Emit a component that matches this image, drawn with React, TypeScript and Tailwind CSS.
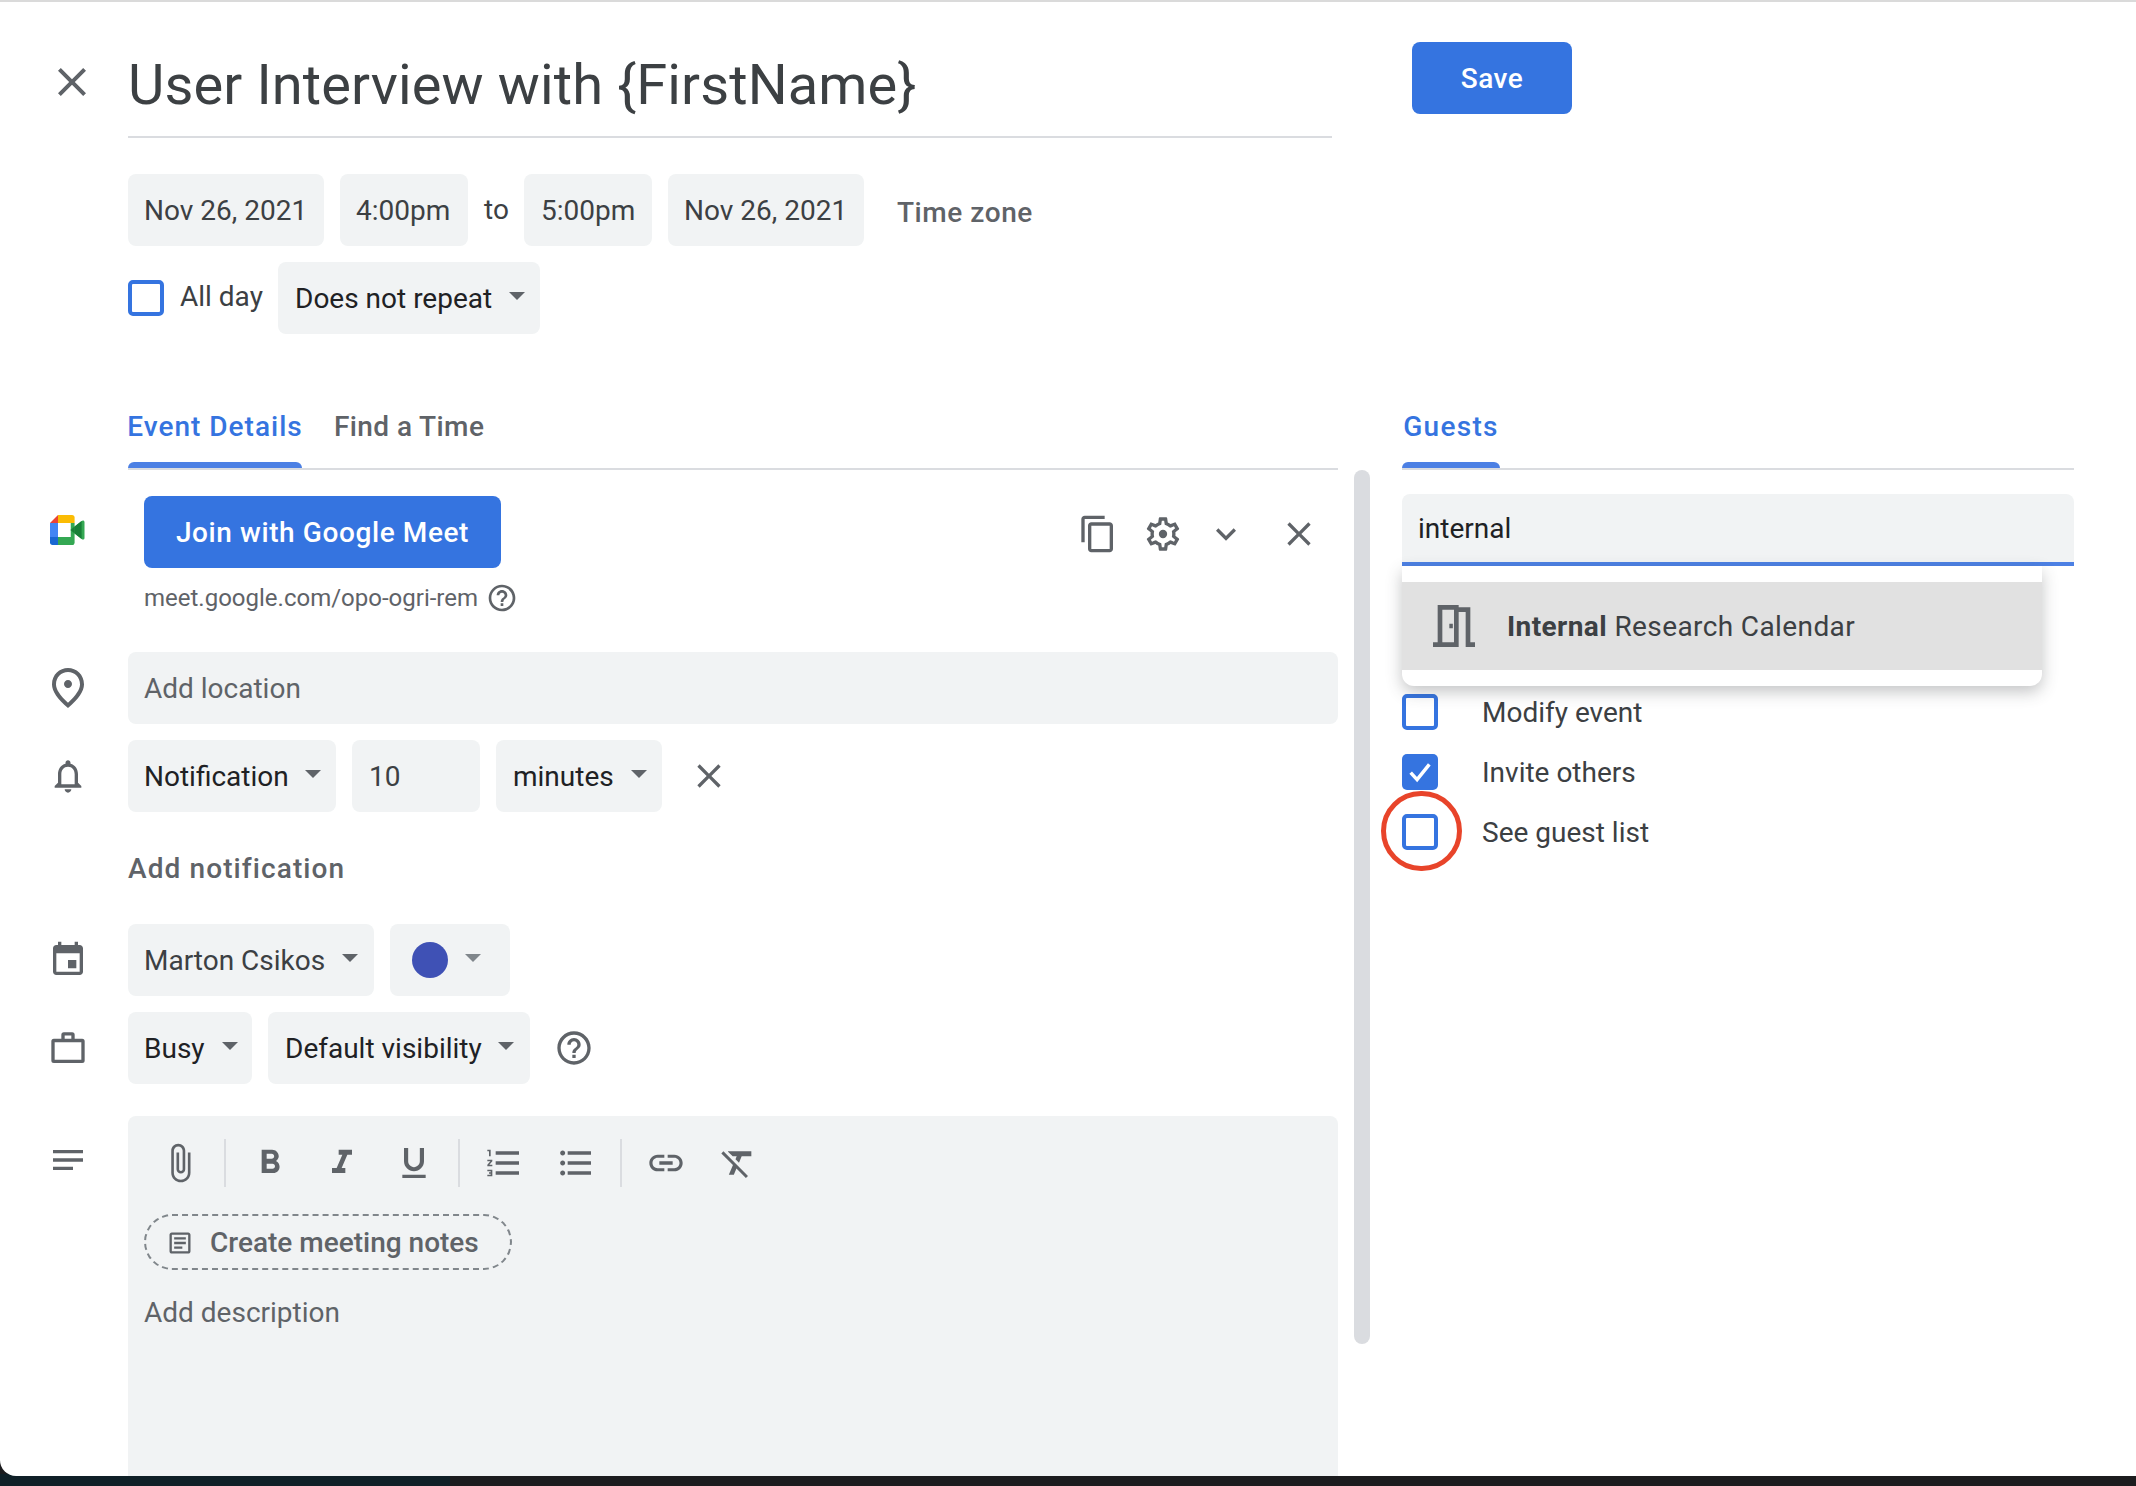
import React from "react";

const P: Record<string, string> = {
  close: "M19 6.41L17.59 5 12 10.59 6.41 5 5 6.41 10.59 12 5 17.59 6.41 19 12 13.41 17.59 19 19 17.59 13.41 12z",
  copy: "M16 1H4c-1.1 0-2 .9-2 2v14h2V3h12V1zm3 4H8c-1.1 0-2 .9-2 2v14c0 1.1.9 2 2 2h11c1.1 0 2-.9 2-2V7c0-1.1-.9-2-2-2zm0 16H8V7h11v14z",
  gear: "M19.43 12.98c.04-.32.07-.64.07-.98 0-.34-.03-.66-.07-.98l2.11-1.65c.19-.15.24-.42.12-.64l-2-3.46c-.09-.16-.26-.25-.44-.25-.06 0-.12.01-.17.03l-2.49 1c-.52-.4-1.08-.73-1.69-.98l-.38-2.65C14.46 2.18 14.25 2 14 2h-4c-.25 0-.46.18-.49.42l-.38 2.65c-.61.25-1.17.59-1.69.98l-2.49-1c-.06-.02-.12-.03-.18-.03-.17 0-.34.09-.43.25l-2 3.46c-.13.22-.07.49.12.64l2.11 1.65c-.04.32-.07.65-.07.98 0 .33.03.66.07.98l-2.11 1.65c-.19.15-.24.42-.12.64l2 3.46c.09.16.26.25.44.25.06 0 .12-.01.17-.03l2.49-1c.52.4 1.08.73 1.69.98l.38 2.65c.03.24.24.42.49.42h4c.25 0 .46-.18.49-.42l.38-2.65c.61-.25 1.17-.59 1.69-.98l2.49 1c.06.02.12.03.18.03.17 0 .34-.09.43-.25l2-3.46c.12-.22.07-.49-.12-.64l-2.11-1.65zm-1.98-1.71c.04.31.05.52.05.73 0 .21-.02.43-.05.73l-.14 1.13.89.7 1.08.84-.7 1.21-1.27-.51-1.04-.42-.9.68c-.43.32-.84.56-1.25.73l-1.06.43-.16 1.13-.2 1.35h-1.4l-.19-1.35-.16-1.13-1.06-.43c-.43-.18-.83-.41-1.23-.71l-.91-.7-1.06.43-1.27.51-.7-1.21 1.08-.84.89-.7-.14-1.13c-.03-.31-.05-.54-.05-.74s.02-.43.05-.73l.14-1.13-.89-.7-1.08-.84.7-1.21 1.27.51 1.04.42.9-.68c.43-.32.84-.56 1.25-.73l1.06-.43.16-1.13.2-1.35h1.39l.19 1.35.16 1.13 1.06.43c.43.18.83.41 1.23.71l.91.7 1.06-.43 1.27-.51.7 1.21-1.07.85-.89.7.14 1.13zM12 9.5a2.5 2.5 0 1 0 0 5 2.5 2.5 0 0 0 0-5z",
  chevron: "M16.59 8.59L12 13.17 7.41 8.59 6 10l6 6 6-6z",
  help: "M11 18h2v-2h-2v2zm1-16C6.48 2 2 6.48 2 12s4.48 10 10 10 10-4.48 10-10S17.52 2 12 2zm0 18c-4.41 0-8-3.59-8-8s3.59-8 8-8 8 3.59 8 8-3.59 8-8 8zm0-14c-2.21 0-4 1.79-4 4h2c0-1.1.9-2 2-2s2 .9 2 2c0 2-3 1.75-3 5h2c0-2.25 3-2.5 3-5 0-2.21-1.79-4-4-4z",
  place: "M12 12c-1.1 0-2-.9-2-2s.9-2 2-2 2 .9 2 2-.9 2-2 2zm6-1.8C18 6.57 15.35 4 12 4s-6 2.57-6 6.2c0 2.34 1.95 5.44 6 9.14 4.05-3.7 6-6.8 6-9.14zM12 2c4.2 0 8 3.22 8 8.2 0 3.32-2.67 7.25-8 11.8-5.33-4.55-8-8.48-8-11.8C4 5.22 7.8 2 12 2z",
  bell: "M12 22c1.1 0 2-.9 2-2h-4c0 1.1.9 2 2 2zm6-6v-5c0-3.07-1.63-5.64-4.5-6.32V4c0-.83-.67-1.5-1.5-1.5s-1.5.67-1.5 1.5v.68C7.64 5.36 6 7.92 6 11v5l-2 2v1h16v-1l-2-2zm-2 1H8v-6c0-2.48 1.51-4.5 4-4.5s4 2.02 4 4.5v6z",
  event: "M17 12h-5v5h5v-5zM16 1v2H8V1H6v2H5c-1.11 0-1.99.9-1.99 2L3 19c0 1.1.89 2 2 2h14c1.1 0 2-.9 2-2V5c0-1.1-.9-2-2-2h-1V1h-2zm3 18H5V8h14v11z",
  work: "M3.5 6.5H8V4a1.5 1.5 0 0 1 1.5-1.5h5A1.5 1.5 0 0 1 16 4v2.5h4.5A1.5 1.5 0 0 1 22 8v11.5a1.5 1.5 0 0 1-1.5 1.5h-17A1.5 1.5 0 0 1 2 19.5V8a1.5 1.5 0 0 1 1.5-1.5zM4 8.5V19h16V8.5zM10 4.5v2h4v-2z",
  notes: "M3 6h18v2H3zm0 5h18v2H3zm0 5h12v2H3z",
  attach: "M16.5 6v11.5c0 2.21-1.79 4-4 4s-4-1.79-4-4V5c0-1.38 1.12-2.5 2.5-2.5s2.5 1.12 2.5 2.5v10.5c0 .55-.45 1-1 1s-1-.45-1-1V6H10v9.5c0 1.38 1.12 2.5 2.5 2.5s2.5-1.12 2.5-2.5V5c0-2.21-1.79-4-4-4S7 2.79 7 5v12.5c0 3.04 2.46 5.5 5.5 5.5s5.5-2.46 5.5-5.5V6h-1.5z",
  bold: "M15.6 10.79c.97-.67 1.65-1.77 1.65-2.79 0-2.26-1.75-4-4-4H7v14h7.04c2.09 0 3.71-1.7 3.71-3.79 0-1.52-.86-2.82-2.15-3.42zM10 6.5h3c.83 0 1.5.67 1.5 1.5s-.67 1.5-1.5 1.5h-3v-3zm3.5 9H10v-3h3.5c.83 0 1.5.67 1.5 1.5s-.67 1.5-1.5 1.5z",
  italic: "M10 4v3h2.21l-3.42 8H6v3h8v-3h-2.21l3.42-8H18V4z",
  underline: "M12 17c3.31 0 6-2.69 6-6V3h-2.5v8c0 1.93-1.57 3.5-3.5 3.5S8.5 12.93 8.5 11V3H6v8c0 3.31 2.69 6 6 6zm-7 2v2h14v-2H5z",
  numbered: "M2 17h2v.5H3v1h1v.5H2v1h3v-4H2v1zm1-9h1V4H2v1h1v3zm-1 3h1.8L2 13.1v.9h3v-1H3.2L5 10.9V10H2v1zm5-6v2h14V5H7zm0 14h14v-2H7v2zm0-6h14v-2H7v2z",
  bulleted: "M4 10.5c-.83 0-1.5.67-1.5 1.5s.67 1.5 1.5 1.5 1.5-.67 1.5-1.5-.67-1.5-1.5-1.5zm0-6c-.83 0-1.5.67-1.5 1.5S3.17 7.5 4 7.5 5.5 6.83 5.5 6 4.83 4.5 4 4.5zm0 12c-.83 0-1.5.68-1.5 1.5s.68 1.5 1.5 1.5 1.5-.68 1.5-1.5-.67-1.5-1.5-1.5zM7 19h14v-2H7v2zm0-6h14v-2H7v2zm0-8v2h14V5H7z",
  link: "M3.9 12c0-1.71 1.39-3.1 3.1-3.1h4V7H7c-2.76 0-5 2.24-5 5s2.24 5 5 5h4v-1.9H7c-1.71 0-3.1-1.39-3.1-3.1zM8 13h8v-2H8v2zm9-6h-4v1.9h4c1.71 0 3.1 1.39 3.1 3.1s-1.39 3.1-3.1 3.1h-4V17h4c2.76 0 5-2.24 5-5s-2.24-5-5-5z",
  clear: "M3.27 5L2 6.27l6.97 6.97L6.5 19h3l1.57-3.66L16.73 21 18 19.73 3.55 5.27 3.27 5zM6 5v.18L8.82 8h2.4l-.72 1.68 2.1 2.1L14.21 8H20V5H6z",
  doc: "M19 5v14H5V5h14m0-2H5c-1.1 0-2 .9-2 2v14c0 1.1.9 2 2 2h14c1.1 0 2-.9 2-2V5c0-1.1-.9-2-2-2zM7 7h10v2H7zm0 4h10v2H7zm0 4h7v2H7z",
  door: "M14 6v15H3v-2h2V3h9v1h5v15h2v2h-4V6h-3zM12 5H7v14h5V5zM10 11h1.5v2H10z",
};

function Icon({ d, size = 40, className = "" }: { d: string; size?: number; className?: string }) {
  return (
    <svg width={size} height={size} viewBox="0 0 24 24" className={"shrink-0 fill-[#5f6368] " + className}>
      <path fillRule="evenodd" d={P[d]} />
    </svg>
  );
}

function Caret({ muted }: { muted?: boolean }) {
  return (
    <svg width="16" height="8" viewBox="0 0 16 8" className={"shrink-0 -mt-[6px] " + (muted ? "fill-[#80868b]" : "fill-[#5f6368]")}>
      <polygon points="0,0 16,0 8,8" />
    </svg>
  );
}

function Pill({ children, className = "" }: { children: React.ReactNode; className?: string }) {
  return (
    <div className={"h-[72px] pt-[2px] rounded-lg bg-[#f1f3f4] flex items-center text-[28px] text-[#3c4043] shrink-0 whitespace-nowrap " + className}>
      {children}
    </div>
  );
}

function Check({ checked }: { checked?: boolean }) {
  return checked ? (
    <div className="w-9 h-9 rounded-[5px] bg-[#3574e0] flex items-center justify-center shrink-0">
      <svg width="28" height="28" viewBox="0 0 24 24" className="fill-none stroke-white">
        <path d="M4 12.5l5.5 6L20 5.5" strokeWidth="3" />
      </svg>
    </div>
  ) : (
    <div className="w-9 h-9 rounded-[5px] border-4 border-[#3574e0] shrink-0" />
  );
}

function MeetLogo() {
  return (
    <svg width="36" height="30" viewBox="0 0 36 30">
      <path d="M8 0L0 8h8z" fill="#ea4335" />
      <path d="M0 8h8v14H0z" fill="#4285f4" />
      <path d="M0 22h8v8H2.5C1 30 0 29 0 27.5z" fill="#1967d2" />
      <path d="M8 0h14c1.5 0 2.6 1 2.6 2.6V8H8z" fill="#fbbc04" />
      <path d="M8 22h16.6v5.4c0 1.6-1.1 2.6-2.6 2.6H8z" fill="#34a853" />
      <path d="M20.5 8h4.1v14H20.5z" fill="#34a853" />
      <path d="M8 8h12.5v14H8z" fill="#ffffff" />
      <path d="M20.5 15l4.1-3.4 7-5.7c1.2-1 2.9-.5 2.9 1.2v15.8c0 1.7-1.7 2.2-2.9 1.2l-7-5.7z" fill="#34a853" />
      <path d="M20.5 15l4.1-3.4V18.4z" fill="#188038" />
      <path d="M24.6 11.6l7-5.7v18.2l-7-5.7z" fill="#188038" />
    </svg>
  );
}

function Row({ icon, size = 40, className = "", children }: { icon?: string; size?: number; className?: string; children: React.ReactNode }) {
  return (
    <div className={"flex items-center " + className}>
      <div className="w-[128px] flex justify-center shrink-0 pl-[8px]">
        {icon ? <Icon d={icon} size={size} /> : null}
      </div>
      {children}
    </div>
  );
}

function Divider() {
  return <div className="w-[2px] h-[48px] mx-2 bg-[#dadce0] shrink-0" />;
}

function Tool({ d, size = 40 }: { d: string; size?: number }) {
  return (
    <div className="w-[72px] h-[48px] flex items-center justify-center shrink-0">
      <Icon d={d} size={size} />
    </div>
  );
}

export default function App() {
  return (
    <div className="w-[2136px] h-[1486px] bg-[#1c1c1e] overflow-hidden relative font-['Roboto',sans-serif]">
      <div className="absolute left-0 bottom-0 w-[450px] h-[12px] bg-[#0f2027]" />
      <div className="relative h-[1476px] bg-white border-t-2 border-[#dadada] rounded-bl-[16px] overflow-hidden flex flex-col">
        {/* Header */}
        <div className="flex h-[136px] shrink-0">
          <div className="w-[128px] shrink-0 flex justify-center pt-[56px] pl-[16px]">
            <Icon d="close" size={48} />
          </div>
          <div className="w-[1204px] h-[136px] border-b-2 border-[#dadce0] shrink-0 pt-[49px]">
            <div className="text-[56px] leading-[68px] tracking-[0.13px] text-[#3c4043]">User Interview with {"{"}FirstName{"}"}</div>
          </div>
          <div className="ml-[80px] pt-[40px]">
            <div className="w-[160px] h-[72px] pt-[2px] rounded-lg bg-[#3574e0] text-white text-[28px] font-medium tracking-[0.5px] flex items-center justify-center">Save</div>
          </div>
        </div>

        {/* Date rows */}
        <div className="pl-[128px] mt-[36px] flex items-center gap-4">
          <Pill className="w-[196px] pl-[16px]">Nov 26, 2021</Pill>
          <Pill className="w-[128px] pl-[16px]">4:00pm</Pill>
          <div className="text-[28px] text-[#3c4043] w-[24px] text-center">to</div>
          <Pill className="w-[128px] pl-[17px]">5:00pm</Pill>
          <Pill className="w-[196px] pl-[16px]">Nov 26, 2021</Pill>
          <div className="ml-[17px] mt-[6px] text-[28px] font-medium tracking-[0.55px] text-[#5f6368]">Time zone</div>
        </div>
        <div className="pl-[128px] mt-4 flex items-center">
          <Check />
          <div className="ml-[16px] text-[28px] text-[#3c4043] w-[82px] -mt-[2px] whitespace-nowrap">All day</div>
          <Pill className="ml-4 w-[262px] pl-[17px] gap-[17px] text-[#202124]">
            <span>Does not repeat</span>
            <Caret />
          </Pill>
        </div>

        {/* Tabs */}
        <div className="flex h-[136px] shrink-0 items-end">
          <div className="ml-[128px] w-[1210px] h-[136px] border-b-2 border-[#dadce0] flex items-end gap-[32px] shrink-0">
            <div className="relative h-full w-[174px] flex items-end justify-center pb-[23px]">
              <span className="text-[28px] leading-[36px] font-medium tracking-[1px] whitespace-nowrap text-[#3574e0]">Event Details</span>
              <div className="absolute left-0 right-0 bottom-0 h-[6px] rounded-t-[6px] bg-[#4c80e4]" />
            </div>
            <div className="h-full flex items-end pb-[23px]">
              <span className="text-[28px] leading-[36px] font-medium tracking-[0.4px] text-[#5f6368]">Find a Time</span>
            </div>
          </div>
          <div className="ml-[64px] w-[672px] h-[136px] border-b-2 border-[#dadce0] flex items-end">
            <div className="relative h-full w-[98px] flex items-end justify-center pb-[23px]">
              <span className="text-[28px] leading-[36px] font-medium tracking-[1.3px] text-[#3574e0]">Guests</span>
              <div className="absolute left-0 right-0 bottom-0 h-[6px] rounded-t-[6px] bg-[#4c80e4]" />
            </div>
          </div>
        </div>

        {/* Body */}
        <div className="flex flex-1 min-h-0">
          {/* Left */}
          <div className="w-[1338px] shrink-0 flex flex-col">
            <div className="flex pt-[26px] h-[182px] shrink-0">
              <div className="w-[136px] shrink-0 flex justify-center pt-[19px]">
                <MeetLogo />
              </div>
              <div className="w-[1202px] flex flex-col pl-[8px]">
                <div className="flex items-center">
                  <div className="w-[357px] h-[72px] pt-[2px] rounded-lg bg-[#3574e0] text-white text-[28px] font-medium tracking-[0.6px] flex items-center justify-center shrink-0">Join with Google Meet</div>
                  <div className="ml-[577px] mt-[3px] flex items-center gap-[25px]">
                    <Icon d="copy" />
                    <Icon d="gear" />
                    <Icon d="chevron" className="ml-[-2px]" />
                    <Icon d="close" className="ml-[8px]" />
                  </div>
                </div>
                <div className="mt-[12px] flex items-center text-[24px] text-[#5f6368]">
                  <span>meet.google.com/opo-ogri-rem</span>
                  <Icon d="help" size={32} className="ml-[8px]" />
                </div>
              </div>
            </div>

            <Row icon="place" size={48} className="h-[72px]">
              <div className="w-[1210px] h-[72px] pt-[2px] rounded-lg bg-[#f1f3f4] flex items-center pl-4 text-[28px] text-[#5f6368]">Add location</div>
            </Row>

            <Row icon="bell" className="mt-4">
              <div className="flex items-center gap-4">
                <Pill className="w-[208px] pl-[16px] gap-[16px] text-[#202124]"><span>Notification</span><Caret /></Pill>
                <Pill className="w-[128px] pl-[17px]">10</Pill>
                <Pill className="w-[166px] pl-[17px] gap-[17px] text-[#202124]"><span>minutes</span><Caret /></Pill>
                <Icon d="close" className="ml-[11px]" />
              </div>
            </Row>

            <div className="pl-[128px] pt-[2px] h-[112px] flex items-center text-[28px] font-medium tracking-[1.1px] text-[#5f6368] shrink-0">Add notification</div>

            <Row icon="event">
              <div className="flex items-center gap-4">
                <Pill className="w-[246px] pl-[16px] gap-[17px]"><span>Marton Csikos</span><Caret /></Pill>
                <Pill className="w-[120px] pl-[22px] gap-[17px]">
                  <div className="w-9 h-9 -mt-[2px] rounded-full bg-[#3f51b5]" />
                  <Caret muted />
                </Pill>
              </div>
            </Row>

            <Row icon="work" className="mt-4">
              <div className="flex items-center gap-4">
                <Pill className="w-[124px] pl-[16px] gap-[17px] text-[#202124]"><span>Busy</span><Caret /></Pill>
                <Pill className="w-[262px] pl-[17px] gap-[16px] text-[#202124]"><span>Default visibility</span><Caret /></Pill>
                <Icon d="help" className="ml-[8px]" />
              </div>
            </Row>

            <div className="flex mt-8 flex-1 min-h-0">
              <div className="w-[128px] shrink-0 flex justify-center pl-[8px] pt-[24px]">
                <Icon d="notes" />
              </div>
              <div className="w-[1210px] bg-[#f1f3f4] rounded-t-lg pt-[23px] pl-[16px]">
                <div className="flex items-center">
                  <Tool d="attach" size={42} />
                  <Divider />
                  <Tool d="bold" />
                  <Tool d="italic" />
                  <Tool d="underline" />
                  <Divider />
                  <Tool d="numbered" />
                  <Tool d="bulleted" />
                  <Divider />
                  <Tool d="link" />
                  <Tool d="clear" />
                </div>
                <div className="mt-[27px] w-[368px] h-[56px] pt-[1px] rounded-[28px] border-2 border-dashed border-[#80868b] flex items-center pl-[20px] gap-[16px]">
                  <Icon d="doc" size={28} />
                  <span className="text-[28px] font-medium text-[#5f6368]">Create meeting notes</span>
                </div>
                <div className="mt-[25px] text-[28px] leading-[36px] text-[#5f6368]">Add description</div>
              </div>
            </div>
          </div>

          {/* Scrollbar */}
          <div className="ml-4 w-4 h-[874px] rounded-lg bg-[#dadce0] shrink-0" />

          {/* Right */}
          <div className="ml-8 w-[672px] shrink-0 pt-6">
            <div className="relative">
              <div className="h-[72px] pt-[2px] rounded-t-lg bg-[#f1f3f4] border-b-4 border-[#4c80e4] flex items-center pl-4 text-[28px] text-[#202124]">internal</div>
              <div className="absolute left-0 top-full w-[640px] h-[120px] bg-white rounded-b-[12px] shadow-[0_6px_16px_rgba(60,64,67,0.3)] py-4 z-10">
                <div className="h-[88px] pt-[2px] bg-[#e1e1e1] flex items-center pl-[24px] gap-[25px]">
                  <Icon d="door" size={56} className="-mt-[2px]" />
                  <div className="text-[28px] tracking-[0.4px] text-[#3c4043]"><span className="font-bold">Internal</span> Research Calendar</div>
                </div>
              </div>
            </div>
            <div className="mt-[128px] flex flex-col gap-6">
              <div className="flex items-center h-9 gap-[44px]"><Check /><span className="text-[28px] leading-[36px] pt-[2px] text-[#3c4043]">Modify event</span></div>
              <div className="flex items-center h-9 gap-[44px]"><Check checked /><span className="text-[28px] leading-[36px] pt-[2px] text-[#3c4043]">Invite others</span></div>
              <div className="relative flex items-center h-9 gap-[44px]">
                <Check />
                <span className="text-[28px] leading-[36px] pt-[2px] text-[#3c4043]">See guest list</span>
                <div className="absolute -left-[21px] -top-[23px] w-[81px] h-[80px] rounded-full border-[5px] border-[#e8442a]" />
              </div>
            </div>
          </div>
        </div>
      </div>
    </div>
  );
}
